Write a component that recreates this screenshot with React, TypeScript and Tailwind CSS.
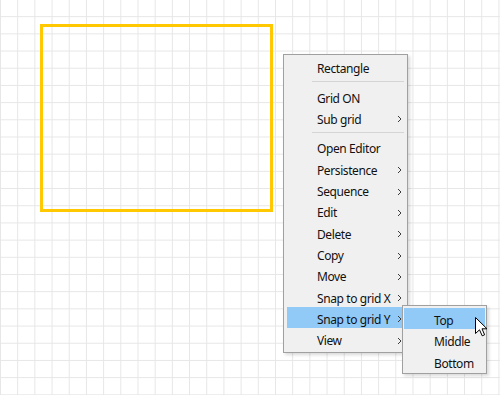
import React from "react";

type Item = { label?: string; sub?: boolean; sep?: boolean; active?: boolean };

const items: Item[] = [
  { label: "Rectangle" },
  { sep: true },
  { label: "Grid ON" },
  { label: "Sub grid", sub: true },
  { sep: true },
  { label: "Open Editor" },
  { label: "Persistence", sub: true },
  { label: "Sequence", sub: true },
  { label: "Edit", sub: true },
  { label: "Delete", sub: true },
  { label: "Copy", sub: true },
  { label: "Move", sub: true },
  { label: "Snap to grid X", sub: true },
  { label: "Snap to grid Y", sub: true, active: true },
  { label: "View", sub: true },
];

function Chevron() {
  return (
    <svg width="5" height="8" viewBox="0 0 5 8" className="shrink-0">
      <polyline points="1,1 4,4 1,7" fill="none" stroke="#3c3c3c" strokeWidth="1" />
    </svg>
  );
}

function Cursor() {
  return (
    <svg width="13" height="20" viewBox="0 0 13 20" className="absolute left-[475px] top-[317px]">
      <path
        d="M0.5 0.5 L0.5 16.5 L4.5 12.8 L7.2 18.8 L9.6 17.8 L7 11.8 L12 11.8 Z"
        fill="#ffffff"
        stroke="#000000"
        strokeWidth="1"
        strokeLinejoin="miter"
      />
    </svg>
  );
}

export default function App() {
  return (
    <div
      className="relative w-[500px] h-[395px] overflow-hidden bg-white bg-[linear-gradient(to_right,#e6e6e6_1px,transparent_1px),linear-gradient(to_bottom,#e6e6e6_1px,transparent_1px)] bg-[size:17.2px_17.2px] bg-[position:0_-1px]"
      style={{ fontFamily: '"Noto Sans", "Open Sans", sans-serif' }}
    >
      {/* canvas rectangle */}
      <div className="absolute left-[40px] top-[24px] w-[233px] h-[188px] border-[3px] border-[#ffc800]" />

      {/* context menu */}
      <div className="absolute left-[283px] top-[54px] w-[125px] border border-[#a0a0a0] bg-[#f0f0f0] px-[3px] pt-[1px] pb-[2px] shadow-[2px_2px_3px_rgba(0,0,0,0.15)] text-[12px] tracking-[-0.4px] text-[#111]">
        {items.map((it, i) =>
          it.sep ? (
            <div key={i} className="h-[8.2px] flex items-center pl-[25px]">
              <div className="h-px w-full bg-[#d5d5d5]" />
            </div>
          ) : (
            <div
              key={i}
              className={
                "h-[21.33px] flex items-start justify-between pl-[30px] pr-[2px] pt-[4px] leading-[17px] " +
                (it.active ? "bg-[#91c9f7]" : "")
              }
            >
              <span className="whitespace-nowrap">{it.label}</span>
              {it.sub && (
                <span className="h-[16px] flex items-center pt-[1px]">
                  <Chevron />
                </span>
              )}
            </div>
          )
        )}
      </div>

      {/* submenu */}
      <div className="absolute left-[402px] top-[305px] w-[85px] border border-[#a0a0a0] bg-[#f0f0f0] px-[1px] pt-[2px] pb-[1px] shadow-[2px_2px_3px_rgba(0,0,0,0.15)] text-[12px] tracking-[-0.4px] text-[#111]">
        {["Top", "Middle", "Bottom"].map((l, i) => (
          <div
            key={l}
            className={
              "h-[21.33px] pl-[30px] pt-[4px] leading-[17px] " + (i === 0 ? "bg-[#91c9f7]" : "")
            }
          >
            {l}
          </div>
        ))}
      </div>

      <Cursor />
    </div>
  );
}
